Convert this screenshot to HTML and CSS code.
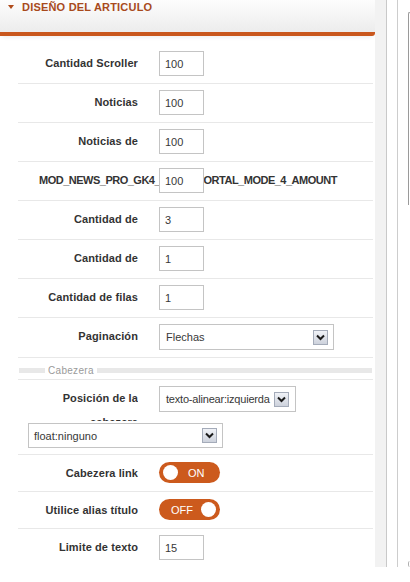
FILE: index.html
```html
<!DOCTYPE html>
<html lang="es">
<head>
<meta charset="utf-8">
<title>Diseño del articulo</title>
<link rel="stylesheet" href="styles.css">
</head>
<body>
<div class="page">
  <div class="panel">
    <div class="head"><span class="tri"></span><span class="title">DISEÑO DEL ARTICULO</span></div>
    <div class="body">
      <div class="row"><label class="lbl">Cantidad Scroller</label><input class="inp" type="text" value="100"></div>
      <div class="row"><label class="lbl">Noticias adicionales</label><input class="inp" type="text" value="100"></div>
      <div class="row"><label class="lbl">Noticias de portada</label><input class="inp" type="text" value="100"></div>
      <div class="row"><label class="lbl lbl-long">MOD_NEWS_PRO_GK4_NEWS_PORTAL_MODE_4_AMOUNT</label><input class="inp" type="text" value="100"></div>
      <div class="row"><label class="lbl">Cantidad de columnas</label><input class="inp" type="text" value="3"></div>
      <div class="row"><label class="lbl">Cantidad de páginas</label><input class="inp" type="text" value="1"></div>
      <div class="row"><label class="lbl">Cantidad de filas</label><input class="inp" type="text" value="1"></div>
      <div class="row row-sel"><label class="lbl">Paginación</label>
        <div class="sel sel-pag"><span>Flechas</span><span class="arr"><svg width="9" height="7" viewBox="0 0 9 7"><polyline points="1,1.5 4.5,5 8,1.5" fill="none" stroke="#1a1a1a" stroke-width="2"/></svg></span></div>
      </div>
      <div class="legend"><span class="lbar lbar-l"></span><span class="ltxt">Cabezera</span><span class="lbar lbar-r"></span></div>
      <div class="row row-pos"><label class="lbl lbl-clip">Posición de la cabezera</label>
        <div class="sel sel-pos"><span>texto-alinear:izquierda</span><span class="arr"><svg width="9" height="7" viewBox="0 0 9 7"><polyline points="1,1.5 4.5,5 8,1.5" fill="none" stroke="#1a1a1a" stroke-width="2"/></svg></span></div>
        <div class="sel sel-float"><span>float:ninguno</span><span class="arr"><svg width="9" height="7" viewBox="0 0 9 7"><polyline points="1,1.5 4.5,5 8,1.5" fill="none" stroke="#1a1a1a" stroke-width="2"/></svg></span></div>
      </div>
      <div class="row row-tog"><label class="lbl">Cabezera link</label>
        <div class="tog tog-on"><span class="knob"></span><span class="ttxt">ON</span></div>
      </div>
      <div class="row row-tog"><label class="lbl">Utilice alias título</label>
        <div class="tog tog-off"><span class="ttxt">OFF</span><span class="knob"></span></div>
      </div>
      <div class="row row-last"><label class="lbl">Limite de texto</label><input class="inp" type="text" value="15"></div>
    </div>
  </div>
  <div class="gutter"></div>
  <div class="gap"></div>
  <div class="edge"><span class="sbar"></span><span class="mark"></span></div>
</div>
</body>
</html>
```
FILE: styles.css
```css
html, body {
  margin: 0;
  padding: 0;
  background: #fff;
}
body {
  font-family: "Liberation Sans", Arial, sans-serif;
  color: #333;
}
.page {
  display: flex;
  height: 567px;
}
.panel {
  width: 375px;
  flex: none;
  background: #fff;
}
.head {
  height: 36px;
  box-sizing: border-box;
  border-bottom: 4px solid #c9571d;
  border-bottom-right-radius: 3px;
  background: linear-gradient(#fdfdfd, #ececec);
  box-shadow: 0 3px 4px -2px rgba(0, 0, 0, 0.08);
  display: flex;
  align-items: center;
  padding: 0 0 4px 8px;
}
.tri {
  width: 0;
  height: 0;
  border-left: 3px solid transparent;
  border-right: 3px solid transparent;
  border-top: 4px solid #b04c1c;
  margin-right: 8px;
  margin-top: -14px;
}
.title {
  font-weight: bold;
  font-size: 11px;
  line-height: 14px;
  letter-spacing: 0.2px;
  color: #a84a1c;
  margin-top: -14px;
}
.body {
  padding-top: 9px;
}
.row {
  display: flex;
  align-items: flex-start;
  margin-left: 18px;
  width: 345px;
  padding: 6px 0 7px 10px;
  height: 25px;
  overflow: hidden;
  border-bottom: 1px solid #e8e8e8;
}
.lbl {
  flex: none;
  width: 110px;
  box-sizing: border-box;
  padding: 0 0 0 11px;
  margin-right: 21px;
  text-align: right;
  font-weight: bold;
  font-size: 11px;
  line-height: 24px;
  letter-spacing: 0.1px;
  color: #333;
}
.lbl-long {
  letter-spacing: -0.5px;
}
.inp {
  width: 45px;
  height: 25px;
  box-sizing: border-box;
  border: 1px solid #c4c4c4;
  background: #fff;
  padding: 0 0 0 5px;
  margin: 0;
  font-family: "Liberation Sans", Arial, sans-serif;
  font-size: 11px;
  color: #383838;
  outline: none;
}
.row-sel {
  height: 26px;
}
.sel {
  display: flex;
  align-items: center;
  justify-content: space-between;
  height: 26px;
  box-sizing: border-box;
  border: 1px solid #c4c4c4;
  background: #fff;
  padding: 0 5px 0 6px;
  font-size: 11px;
  color: #383838;
  white-space: nowrap;
}
.sel-pag { width: 175px; }
.sel-pos { width: 137px; padding-right: 6px; letter-spacing: -0.2px; }
.sel-float { width: 195px; height: 25px; padding-left: 5px; }
.arr {
  flex: none;
  width: 15px;
  height: 15px;
  box-sizing: border-box;
  border: 1px solid #a4abb9;
  background: linear-gradient(#f0f2f7, #cdd2dc);
  display: flex;
  align-items: center;
  justify-content: center;
}
.legend {
  margin-left: 18px;
  width: 355px;
  height: 17px;
  padding-top: 4px;
  border-bottom: 1px solid #e8e8e8;
  display: flex;
  align-items: center;
}
.lbar {
  height: 5px;
  background: #e8e8e8;
}
.lbar-l { width: 26px; margin-left: 1px; }
.lbar-r { flex: 1; margin-right: 1px; }
.ltxt {
  padding: 0 3px;
  font-size: 10px;
  letter-spacing: 0.3px;
  color: #9a9a9a;
}
.row-pos {
  height: auto;
  flex-wrap: wrap;
  row-gap: 2px;
  padding-bottom: 6px;
}
.lbl-clip {
  height: 35px;
  overflow: hidden;
}
.row-tog {
  padding: 7px 0 8px 10px;
  height: 21px;
}
.row-tog .lbl {
  line-height: 22px;
}
.row-last {
  border-bottom: none;
}
.tog {
  width: 61px;
  height: 21px;
  box-sizing: border-box;
  border-radius: 11px;
  background: #cc5a1d;
  display: flex;
  align-items: center;
  color: #fff;
  font-size: 11px;
}
.tog-on {
  padding-left: 4px;
}
.tog-on .ttxt {
  margin-left: 10px;
}
.tog-off {
  padding: 0 4px 0 12px;
  justify-content: space-between;
}
.knob {
  width: 15px;
  height: 15px;
  border-radius: 50%;
  background: #fff;
}
.gutter {
  width: 11px;
  flex: none;
  background: #f2f2f2;
  border-right: 1px solid #c9c9c9;
}
.gap {
  width: 10px;
  flex: none;
  border-right: 1px solid #cdcdcd;
}
.edge {
  flex: 1;
  position: relative;
}
.sbar {
  position: absolute;
  left: 10px;
  top: 12px;
  width: 2px;
  height: 192px;
  border-left: 1px solid #9a9a9a;
  border-top: 1px solid #9a9a9a;
  border-top-left-radius: 2px;
}
.mark {
  position: absolute;
  left: 10px;
  top: 561px;
  width: 2px;
  height: 6px;
  border-left: 1px solid #b0b0b0;
  border-top-left-radius: 2px;
  border-bottom-left-radius: 2px;
}
```
